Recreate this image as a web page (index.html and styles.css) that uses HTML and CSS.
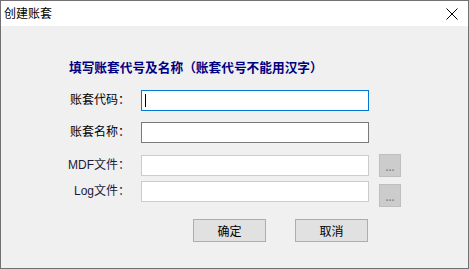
FILE: index.html
```html
<!DOCTYPE html>
<html lang="zh-CN">
<head>
  <meta charset="UTF-8" />
  <meta name="viewport" content="width=device-width, initial-scale=1.0" />
  <title>创建账套</title>
  <link rel="stylesheet" href="styles.css">
</head>
<body>
  <div class="window">
    <div class="titlebar">
      <span class="title">创建账套</span>
      <span class="close-btn">
        <svg width="12" height="12" viewBox="0 0 12 12">
          <path d="M0.5 0.5 L11.5 11.5 M11.5 0.5 L0.5 11.5" stroke="#000" stroke-width="1" fill="none" />
        </svg>
      </span>
    </div>

    <div class="content">
      <h2 class="heading">填写账套代号及名称（账套代号不能用汉字）</h2>

      <div class="row row-code">
        <label class="label">账套代码：</label>
        <div class="field focused"><span class="caret"></span></div>
      </div>

      <div class="row row-name">
        <label class="label">账套名称：</label>
        <div class="field"></div>
      </div>

      <div class="row row-mdf">
        <label class="label">MDF文件：</label>
        <div class="field disabled"></div>
        <span class="browse-btn browse-mdf">...</span>
      </div>

      <div class="row row-log">
        <label class="label">Log文件：</label>
        <div class="field disabled"></div>
        <span class="browse-btn browse-log">...</span>
      </div>

      <div class="actions">
        <button class="btn">确定</button>
        <button class="btn">取消</button>
      </div>
    </div>
  </div>
</body>
</html>
```

FILE: styles.css
```css
html, body {
  margin: 0;
  padding: 0;
}
body {
  font-family: "Liberation Sans", "Noto Sans CJK SC", sans-serif;
  font-size: 12px;
  color: #000;
  background: #f0f0f0;
}
.window {
  width: 469px;
  height: 269px;
  box-sizing: border-box;
  border: 1px solid #717171;
  background: #f0f0f0;
}
.titlebar {
  height: 25px;
  background: #fff;
  display: flex;
  align-items: center;
  justify-content: space-between;
  padding: 0 10px 0 3px;
}
.title {
  font-size: 12px;
  line-height: 16px;
}
.close-btn {
  display: flex;
  align-items: center;
  margin-top: 1px;
}
.content {
  padding-top: 34px;
}
.heading {
  margin: 0 0 0 68px;
  font-size: 12.7px;
  line-height: 16px;
  font-weight: bold;
  color: #000080;
}
.row {
  display: flex;
  align-items: flex-start;
  height: 21px;
}
.row-code { margin-top: 14px; }
.row-name { margin-top: 11px; }
.row-mdf { margin-top: 12px; }
.row-log { margin-top: 5px; }
.label {
  width: 129px;
  text-align: right;
  line-height: 21px;
  margin-right: 11px;
  white-space: nowrap;
}
.row-mdf .label, .row-log .label {
  color: #1b1b3a;
}
.field {
  width: 228px;
  height: 21px;
  box-sizing: border-box;
  background: #fff;
  border: 1px solid #7a7a7a;
  position: relative;
}
.field.focused {
  border-color: #0078d7;
}
.field.disabled {
  border-color: #cccccc;
}
.caret {
  position: absolute;
  left: 3px;
  top: 3px;
  width: 1px;
  height: 13px;
  background: #000;
}
.browse-btn {
  width: 22px;
  height: 23px;
  box-sizing: border-box;
  margin-left: 10px;
  background: #cccccc;
  border: 1px solid #bfbfbf;
  color: #8a8a8a;
  text-align: center;
  line-height: 25px;
  font-size: 11px;
  font-weight: bold;
}
.browse-mdf { margin-top: -1px; }
.browse-log { margin-top: 3px; }
.actions {
  display: flex;
  gap: 29px;
  margin: 17px 0 0 192px;
}
.btn {
  width: 73px;
  height: 23px;
  box-sizing: border-box;
  padding: 0;
  background: #e1e1e1;
  border: 1px solid #adadad;
  border-radius: 0;
  font-family: "Liberation Sans", "Noto Sans CJK SC", sans-serif;
  font-size: 12px;
  color: #000;
}
```
